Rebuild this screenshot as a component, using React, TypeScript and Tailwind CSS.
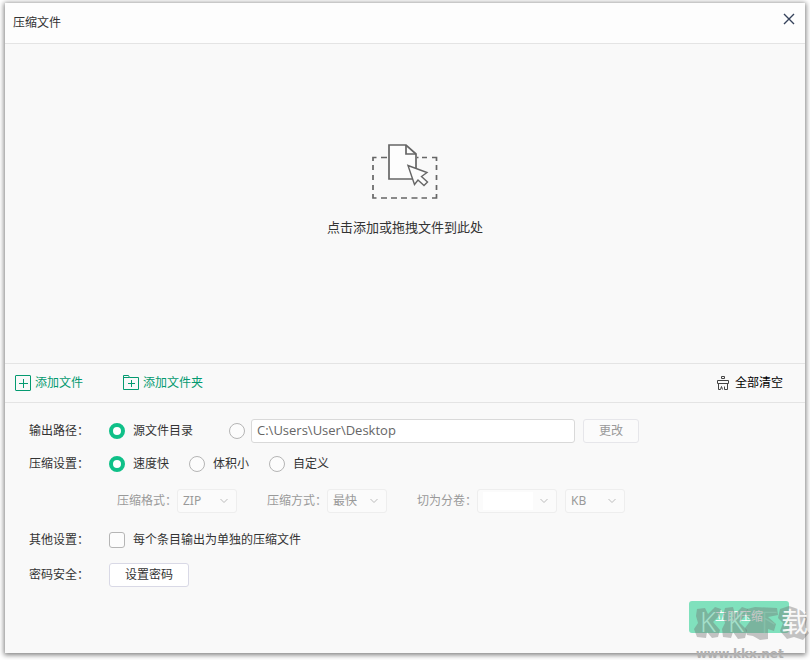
import type { InputHTMLAttributes, ReactNode } from 'react';

function Radio({ children, ...props }: { children?: ReactNode } & InputHTMLAttributes<HTMLInputElement>) {
  return (
    <label className="flex items-center gap-2">
      <input
        type="radio"
        className="size-4 shrink-0 appearance-none rounded-full border border-[#b5b5b5] bg-[#fcfcfc] checked:border-4 checked:border-[#0fc088] checked:bg-white"
        {...props}
      />
      {children}
    </label>
  );
}

function Chevron() {
  return (
    <svg className="h-2 w-2.5" viewBox="0 0 10 8" fill="none" stroke="#bcbcbc" aria-hidden="true">
      <path d="M1.5 2 5 5.5 8.500 2" />
    </svg>
  );
}

function Row({ label, className, children }: { label: string; className: string; children: ReactNode }) {
  return (
    <div className={`flex h-6 items-center ${className}`}>
      <span className="w-20 shrink-0">{label}</span>
      {children}
    </div>
  );
}

function DisabledSelect({ label, value }: { label: string; value: string }) {
  return (
    <div className="relative flex h-6 w-[60px] items-center">
      <select
        disabled
        aria-label={label}
        className="h-6 w-full appearance-none rounded-[3px] border border-[#eeeeee] bg-[#fbfbfb] pl-[5px] text-[#999999] opacity-100"
      >
        <option>{value}</option>
      </select>
      <span className="pointer-events-none absolute right-2">
        <Chevron />
      </span>
    </div>
  );
}

function DropIcon() {
  return (
    <svg className="h-14 w-[66px]" viewBox="0 0 66 56" fill="none" stroke="#666666" aria-hidden="true">
      <path
        d="M1 18v-3.500h3.500M9 14.500h6M45 14.500h1.500M50 14.500h5M60 14.500h4.500V18M1 22v5M1 32v5M1 42v5M1 51v4h3.500M9 55h6M19 55h6M29 55h6M39.500 55h6M49.500 55h5.500M60 55h4.500v-4M64.500 22v5M64.500 32v5M64.500 42v5"
        strokeWidth="1.700"
      />
      <path d="M17 2h17l10 9v25H17z" fill="#fdfdfd" strokeWidth="1.700" />
      <path d="M34 2v9h10" strokeWidth="1.700" />
      <path d="m36 22.500 6.500 19 3.500-4.500 6 5.500 3.500-3.500-6-5.500 5.500-4z" fill="#fdfdfd" strokeWidth="1.400" />
    </svg>
  );
}

function Watermark() {
  return (
    <div className="pointer-events-none absolute right-0 bottom-0 h-14 w-[118px]" aria-hidden="true">
      <svg className="absolute inset-0 size-full" viewBox="0 0 118 56" fill="#707070" fillOpacity=".4">
        <path d="m5 5 8-1 3 6 7-7 6 2-2 7-6 6 7 8-2 7-6 1-5-6-1 6-9-1-3-8 4-6-2-7z" />
        <path d="m33 4 8-1 2 7 7-7 6 2-3 7-6 6 8 8-2 8-7 1-5-7-2 6-8-1-1-8 3-6-2-7z" />
        <path d="m55 5 8-2 22 1 1 7-10 2 8 7-2 7-6-2v10l-8 1-7-4-6-1-2-7 6-8-5-5z" />
        <path d="m88 5 9-3 6 2 8 3 4 8-2 8 4 6-6 7-9-3-7 2-7-8 3-8-5-5z" />
      </svg>
      <div className="absolute top-0 left-2 flex h-9 items-center text-[27px] font-light text-[#a3dfc9]">
        <span className="w-7">K</span>
        <span className="w-6">K</span>
        <span className="text-[26px] opacity-30">下</span>
      </div>
      <span className="absolute top-0 right-0.5 text-[27px] leading-9 text-white/90">载</span>
      <span className="absolute bottom-0 left-1 font-['DejaVu_Sans'] text-xs leading-3 font-bold text-[#b0b0b0]">
        www.kkx.net
      </span>
    </div>
  );
}

export default function App() {
  return (
    <div className="relative flex min-h-screen flex-col bg-white px-[5px] pt-[3px] pb-[7px] font-['Noto_Sans','Noto_Sans_CJK_SC',sans-serif] text-xs text-[#333333]">
      <main className="flex flex-1 flex-col bg-[#f9f9f9] shadow-[0_1px_5px_1px_rgba(0,0,0,0.5)]">
        <header className="flex h-[41px] items-center justify-between border-b border-[#e4e4e4] bg-[#fdfdfd] pr-2.5 pl-2">
          <h1>压缩文件</h1>
          <button type="button" aria-label="关闭" className="mb-2">
            <svg className="size-3" viewBox="0 0 12 12" fill="none" stroke="#35425b" strokeWidth="1.400">
              <path d="m1 1 10 10M11 1 1 11" />
            </svg>
          </button>
        </header>

        <button type="button" className="flex flex-1 flex-col items-center justify-center gap-5 pb-7 text-[13px]">
          <DropIcon />
          <span>点击添加或拖拽文件到此处</span>
        </button>

        <div className="flex h-10 items-center border-y border-[#e4e4e4] pr-[22px] pl-2.5 text-[#049a70]">
          <button type="button" className="flex items-center gap-1">
            <svg className="size-4" viewBox="0 0 16 16" fill="none" stroke="currentColor" aria-hidden="true">
              <rect x=".5" y=".5" width="15" height="15" rx=".5" />
              <path d="M4 8.500h9M8.500 4v9" />
            </svg>
            添加文件
          </button>
          <button type="button" className="ml-10 flex items-center gap-1">
            <svg className="size-4" viewBox="0 0 16 16" fill="none" stroke="currentColor" aria-hidden="true">
              <path d="M.5 14.500V.5h5l1 2h9v12zM.5 2.500h6M5 8.500h7M8.500 5v7" />
            </svg>
            添加文件夹
          </button>
          <button type="button" className="ml-auto flex items-center gap-1.5 text-black">
            <svg className="h-4 w-3" viewBox="0 0 12 16" fill="none" stroke="#444444" aria-hidden="true">
              <path d="M4.500 1.500h3v2h-3zM.5 8.500v-3h11v3zM1.500 8.500v6h2l1-3 1 3M7.500 11.500v3h3v-6" />
            </svg>
            全部清空
          </button>
        </div>

        <form className="flex flex-col pt-4 pr-4 pb-5 pl-6" onSubmit={(event) => event.preventDefault()}>
          <Row label="输出路径：" className="">
            <Radio name="output" defaultChecked>
              源文件目录
            </Radio>
            <div className="ml-9 flex flex-1 items-center">
              <Radio name="output" aria-label="自定义目录" />
              <input
                type="text"
                aria-label="输出路径"
                defaultValue="C:\Users\User\Desktop"
                className="ml-1.5 h-6 w-[324px] rounded-[3px] border border-[#d9d9d9] bg-white px-[5px] pb-0.5 font-['Open_Sans'] text-[13px] text-[#666666]"
              />
              <button type="button" className="ml-2 h-6 w-14 rounded-[3px] border border-[#e6e6ea] bg-[#fbfbfb] text-[#999999]">
                更改
              </button>
            </div>
          </Row>

          <Row label="压缩设置：" className="mt-[9px]">
            <div className="flex gap-5">
              <Radio name="mode" defaultChecked>
                速度快
              </Radio>
              <Radio name="mode">体积小</Radio>
              <Radio name="mode">自定义</Radio>
            </div>
          </Row>

          <div className="mt-[13px] ml-[88px] flex h-6 items-center text-[#999999]">
            <span className="w-[60px]">压缩格式：</span>
            <DisabledSelect label="压缩格式" value="ZIP" />
            <span className="ml-[30px] w-[60px]">压缩方式：</span>
            <DisabledSelect label="压缩方式" value="最快" />
            <span className="ml-[30px] w-[60px]">切为分卷：</span>
            <div className="mr-2 flex h-6 w-20 items-center justify-between rounded-[3px] border border-[#eeeeee] bg-[#fbfbfb] pr-[7px] pl-[5px]">
              <input type="text" disabled aria-label="分卷大小" className="h-[18px] w-[50px] bg-white" />
              <Chevron />
            </div>
            <DisabledSelect label="分卷单位" value="KB" />
          </div>

          <Row label="其他设置：" className="mt-[15px]">
            <label className="flex items-center gap-2">
              <input type="checkbox" className="size-4 appearance-none rounded-[3px] border border-[#b5b5b5] bg-[#fcfcfc] checked:bg-[#0fc088]" />
              每个条目输出为单独的压缩文件
            </label>
          </Row>

          <Row label="密码安全：" className="mt-[11px]">
            <button type="button" className="h-6 w-20 rounded-[3px] border border-[#d9d9e6] bg-white">
              设置密码
            </button>
          </Row>

          <button type="submit" className="mt-3.5 h-8 w-[100px] self-end rounded-[3px] bg-[#80e1bd] text-white">
            立即压缩
          </button>
        </form>
      </main>
      <Watermark />
    </div>
  );
}
